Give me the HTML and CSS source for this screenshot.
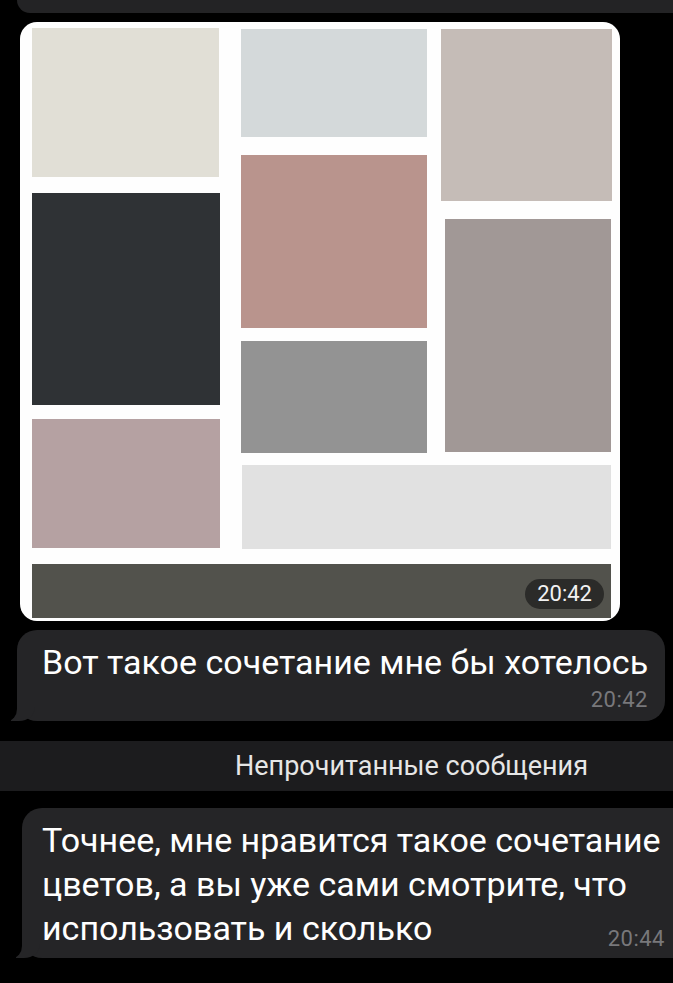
FILE: index.html
```html
<!DOCTYPE html>
<html lang="ru">
<head>
<meta charset="utf-8">
<link rel="stylesheet" href="styles.css">
</head>
<body>
<div class="chat">
  <div class="prev-bubble"></div>

  <div class="photo">
    <div class="collage-top">
      <div class="col col-1">
        <div class="sw sw-beige"></div>
        <div class="sw sw-dark"></div>
        <div class="sw sw-pink"></div>
      </div>
      <div class="right-area">
        <div class="right-row">
          <div class="col col-2">
            <div class="sw sw-blue"></div>
            <div class="sw sw-rose"></div>
            <div class="sw sw-gray"></div>
          </div>
          <div class="col col-3">
            <div class="sw sw-taupe"></div>
            <div class="sw sw-mauve"></div>
          </div>
        </div>
        <div class="sw sw-light"></div>
      </div>
    </div>
    <div class="sw sw-olive">
      <span class="badge">20:42</span>
    </div>
  </div>

  <div class="bubble bubble-1">
    <span class="msg msg-1">Вот такое сочетание мне бы хотелось</span>
    <span class="time">20:42</span>
  </div>

  <div class="unread">Непрочитанные сообщения</div>

  <div class="bubble bubble-2">
    <p class="msg msg-2"><span class="line">Точнее, мне нравится такое сочетание</span> <span class="line">цветов, а вы уже сами смотрите, что</span> <span class="line last-line">использовать и сколько <span class="time time-2">20:44</span></span></p>
  </div>
</div>
</body>
</html>
```

FILE: styles.css
```css
* { box-sizing: border-box; }

html, body {
  margin: 0;
  padding: 0;
  background: #000;
}

body {
  width: 673px;
  height: 983px;
  overflow: hidden;
  font-family: Roboto, "Noto Sans", "DejaVu Sans", sans-serif;
  color: #fff;
}

.chat {
  display: flex;
  flex-direction: column;
}

.prev-bubble {
  height: 13px;
  margin-left: 17px;
  margin-right: -20px;
  background: #232325;
  border-bottom-left-radius: 18px;
}

/* photo message */
.photo {
  position: relative;
  margin-top: 9px;
  margin-left: 20px;
  width: 600px;
  height: 599px;
  background: #fefefe;
  border-radius: 17px;
  padding: 6px 8px 3px 12px;
  display: flex;
  flex-direction: column;
  overflow: hidden;
}

.collage-top {
  display: flex;
  height: 521px;
}

.col {
  display: flex;
  flex-direction: column;
}

.col-1 { width: 187px; }
.right-area {
  margin-left: 22px;
  display: flex;
  flex-direction: column;
}
.right-row { display: flex; }
.col-2 { width: 186px; padding-top: 1px; }
.col-3 { width: 171px; margin-left: 14px; padding-top: 1px; }

.sw { flex: none; }

.sw-beige { height: 149px; background: #e1dfd6; }
.sw-dark  { height: 212px; margin-top: 16px; background: #2f3235; width: 188px; }
.sw-pink  { height: 129px; margin-top: 14px; background: #b5a1a2; width: 188px; }

.sw-blue  { height: 108px; background: #d4d9da; }
.sw-rose  { height: 173px; margin-top: 18px; background: #b9948d; }
.sw-gray  { height: 112px; margin-top: 13px; background: #939393; }

.sw-taupe { height: 172px; background: #c5bcb7; }
.sw-mauve { height: 233px; margin-top: 18px; margin-left: 4px; width: 166px; background: #a19896; }

.sw-light { height: 84px; margin-top: 12px; margin-left: 1px; width: 369px; background: #e1e1e1; }

.sw-olive {
  position: relative;
  margin-top: 15px;
  height: 54px;
  width: 579px;
  background: #52524c;
}

.badge {
  position: absolute;
  right: 7px;
  bottom: 9px;
  height: 30px;
  padding: 0 12px;
  border-radius: 15px;
  background: #2b2b29;
  color: #f2f2f2;
  font-size: 22px;
  line-height: 30px;
}

/* text bubbles */
.bubble {
  position: relative;
  background: #252527;
  border-radius: 20px;
  display: flex;
  flex-direction: column;
}

.bubble::before {
  content: "";
  position: absolute;
  left: -6px;
  bottom: 0;
  width: 24px;
  height: 20px;
  background: #252527;
  border-bottom-right-radius: 16px 14px;
}

.bubble::after {
  content: "";
  position: absolute;
  left: -12px;
  bottom: 0;
  width: 12px;
  height: 22px;
  background: #000;
  border-bottom-right-radius: 10px 12px;
}

.bubble-1 {
  margin-top: 9px;
  margin-left: 17px;
  width: 648px;
  height: 91px;
  padding: 10px 17px 0 25px;
}

.msg {
  font-size: 34px;
  line-height: 44px;
  color: #fff;
  margin: 0;
}

.msg-1 {
  white-space: nowrap;
}

.time {
  align-self: flex-end;
  font-size: 22px;
  line-height: 24px;
  color: #78787b;
  margin-top: 4px;
  letter-spacing: 0.5px;
}

.unread {
  margin-top: 20px;
  height: 50px;
  background: #1c1c1e;
  color: #e6e6e6;
  font-size: 27px;
  line-height: 50px;
  text-align: center;
  padding-left: 150px;
}

.bubble-2 {
  margin-top: 17px;
  margin-left: 22px;
  margin-right: -30px;
  height: 150px;
  padding: 10px 0 0 20px;
  display: block;
}

.msg-2 .line {
  display: block;
  white-space: nowrap;
}

.msg-2 .last-line {
  display: flex;
  align-items: baseline;
  width: 623px;
}

.time-2 {
  margin-left: auto;
  margin-top: 0;
  position: relative;
  top: 1px;
}
```
